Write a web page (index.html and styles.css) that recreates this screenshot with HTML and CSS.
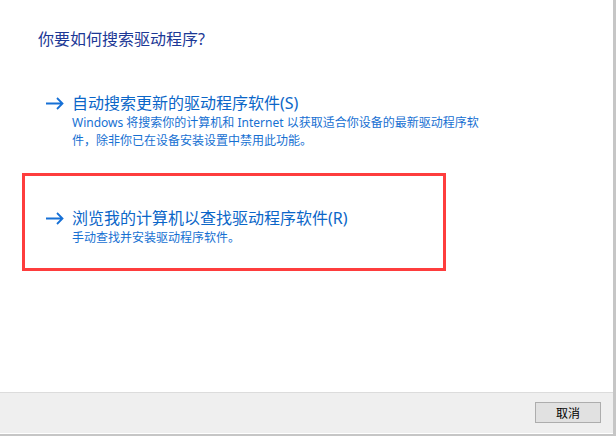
FILE: index.html
```html
<!DOCTYPE html>
<html lang="zh-CN">
<head>
    <meta charset="UTF-8">
    <meta name="viewport" content="width=device-width, initial-scale=1.0">
    <title>更新驱动程序</title>
    <link rel="stylesheet" href="styles.css">
</head>
<body>

    <div class="window">
        <!-- Main content -->
        <div class="content">
            <h1 class="title">你要如何搜索驱动程序?</h1>

            <!-- Option: automatic search -->
            <div class="option">
                <svg class="arrow" width="18" height="13" viewBox="0 0 18 13">
                    <path d="M0 6.5 H16.5 M11 1 L16.5 6.5 L11 12" fill="none" stroke="#1670d6" stroke-width="1.8"/>
                </svg>
                <div class="option-title">自动搜索更新的驱动程序软件(S)</div>
                <p class="option-desc">Windows 将搜索你的计算机和 Internet 以获取适合你设备的最新驱动程序软件，除非你已在设备安装设置中禁用此功能。</p>
            </div>

            <!-- Option: browse (marked) -->
            <div class="marked">
                <div class="option">
                    <svg class="arrow" width="18" height="13" viewBox="0 0 18 13">
                        <path d="M0 6.5 H16.5 M11 1 L16.5 6.5 L11 12" fill="none" stroke="#1670d6" stroke-width="1.8"/>
                    </svg>
                    <div class="option-title">浏览我的计算机以查找驱动程序软件(R)</div>
                    <p class="option-desc">手动查找并安装驱动程序软件。</p>
                </div>
            </div>
        </div>

        <!-- Footer -->
        <div class="footer">
            <button class="btn">取消</button>
        </div>
    </div>

</body>
</html>
```

FILE: styles.css
```css
* {
    margin: 0;
    padding: 0;
    box-sizing: border-box;
}

body {
    background-color: #c6c6c6;
    font-family: "Noto Sans", "Noto Sans CJK SC", sans-serif;
    width: 616px;
    height: 436px;
    overflow: hidden;
}

.window {
    width: 613px;
    height: 434px;
    background-color: #fff;
    display: flex;
    flex-direction: column;
}

.content {
    flex: 1;
    padding-top: 28px;
}

.title {
    margin-left: 38px;
    font-size: 16px;
    font-weight: normal;
    line-height: 22px;
    color: #1c3896;
}

.option {
    display: grid;
    grid-template-columns: 26px auto;
    align-items: center;
    padding-left: 46px;
}

.content > .option {
    margin-top: 42px;
}

.arrow {
    display: block;
}

.option-title {
    font-size: 16px;
    line-height: 22px;
    color: #0b66c8;
}

.option-desc {
    grid-column: 2;
    max-width: 416px;
    font-size: 12px;
    line-height: 18px;
    color: #1670d2;
}

/* Red annotation frame */
.marked {
    margin: 23px 0 0 22px;
    width: 424px;
    height: 98px;
    border: 3px solid #fe3d3d;
    padding-top: 31px;
}

.marked .option {
    padding-left: 21px;
}

.footer {
    height: 42px;
    background-color: #efefef;
    border-top: 1px solid #dcdcdc;
    border-bottom: 1px solid #fff;
    display: flex;
    justify-content: flex-end;
    align-items: flex-start;
    padding: 9px 12px 0 0;
}

.btn {
    width: 66px;
    height: 21px;
    background-color: #e1e1e1;
    border: 1px solid #adadad;
    font-family: "Noto Sans CJK SC", sans-serif;
    font-size: 12px;
    color: #000;
}
```
